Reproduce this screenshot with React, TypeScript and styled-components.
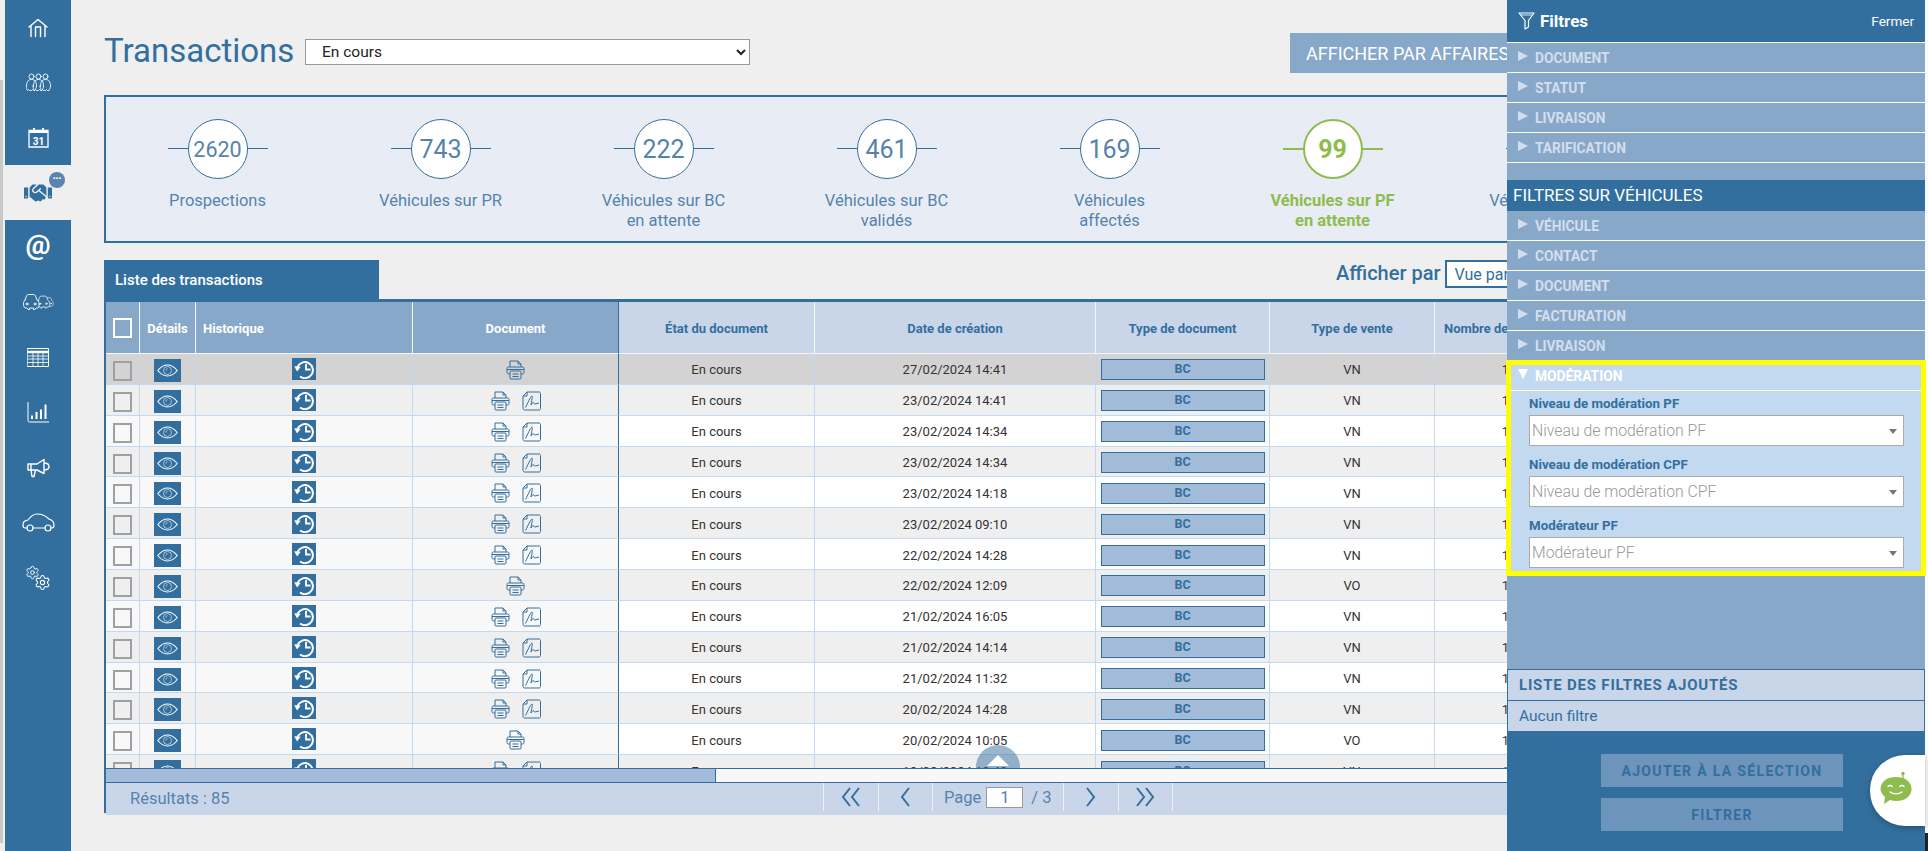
import React from 'react';
import styled, { createGlobalStyle, css } from 'styled-components';
import { FaHandshake } from 'react-icons/fa';
import { Settings } from 'lucide-react';

const BLUE = '#336f9e';
const MID = '#88a8ca';
const PALE = '#c9d6e9';
const GREEN = '#8fbc4e';
const COLS = '34px 56px 217px 206px 196px 281px 174px 165px 142px 200px 200px';

const Global = createGlobalStyle`
  html, body { margin: 0; padding: 0; height: 100%; overflow: hidden; background: #efefef; }
  body { font-family: Roboto, "Liberation Sans", sans-serif; }
  * { box-sizing: border-box; }
`;

const Shell = styled.div`
  position: relative;
  display: flex;
  width: 1928px;
  height: 851px;
  overflow: hidden;
  background: #efefef;
`;
const EdgeBar = styled.div`
  flex: none;
  width: 3px;
  margin: 80px 2px 8px 0;
  background: #c8c8c8;
`;
const Sidebar = styled.nav`
  flex: none;
  width: 66px;
  background: ${BLUE};
  display: flex;
  flex-direction: column;
`;
const NavItem = styled.div<{ $active?: boolean }>`
  position: relative;
  height: 55px;
  display: flex;
  align-items: center;
  justify-content: center;
  color: #fff;
  ${(p) => p.$active && css`background: #efefef; color: ${BLUE};`}
`;
const NavBadge = styled.span`
  position: absolute;
  top: 7px;
  left: 44px;
  width: 16px;
  height: 16px;
  border-radius: 50%;
  background: #5b85b0;
  color: #fff;
  font-size: 8px;
  font-weight: 700;
  line-height: 13px;
  text-align: center;
  letter-spacing: 0;
`;
const AtGlyph = styled.span`
  font-size: 28px;
  font-weight: 700;
  line-height: 1;
  margin-top: -6px;
`;
const Main = styled.main`
  flex: 1;
  min-width: 0;
  overflow: hidden;
  padding: 33px 0 0 33px;
`;
const TitleRow = styled.div`
  display: flex;
  align-items: flex-start;
  height: 39px;
  width: 1800px;
`;
const Title = styled.h1`
  margin: 0;
  width: 201px;
  font-size: 33px;
  line-height: 36px;
  font-weight: 400;
  color: ${BLUE};
`;
const StateSelect = styled.select`
  margin-top: 6px;
  width: 445px;
  height: 26px;
  background: #fff;
  border: 1px solid #999;
  border-radius: 0;
  padding-left: 12px;
  font: 400 15.5px Roboto, sans-serif;
  color: #222;
`;
const GroupButton = styled.button`
  margin-left: 540px;
  flex: none;
  height: 40px;
  padding: 0 16px;
  border: 0;
  background: ${MID};
  color: #fff;
  font: 400 18px Roboto, sans-serif;
  white-space: nowrap;
`;
const Stats = styled.section`
  margin-top: 23px;
  width: 1800px;
  height: 148px;
  border: 2px solid ${BLUE};
  background: #e8edf5;
  padding: 22px 0 0 0;
  display: flex;
`;
const Stat = styled.div<{ $on?: boolean }>`
  flex: none;
  width: 223px;
  display: flex;
  flex-direction: column;
  align-items: center;
  color: ${(p) => (p.$on ? GREEN : '#5583ad')};
`;
const Ring = styled.div<{ $on?: boolean; $long?: boolean }>`
  position: relative;
  width: 60px;
  height: 60px;
  display: flex;
  align-items: center;
  justify-content: center;
  font-size: ${(p) => (p.$long ? 21.5 : 25)}px;
  font-weight: ${(p) => (p.$on ? 700 : 400)};
  &::before {
    content: '';
    position: absolute;
    left: -20px;
    width: 100px;
    top: 29px;
    height: ${(p) => (p.$on ? 2 : 1)}px;
    background: ${(p) => (p.$on ? GREEN : BLUE)};
  }
  &::after {
    content: '';
    position: absolute;
    inset: 0;
    border-radius: 50%;
    background: #fff;
    border: ${(p) => (p.$on ? 2 : 1)}px solid ${(p) => (p.$on ? GREEN : BLUE)};
  }
`;
const RingValue = styled.span`
  position: relative;
  z-index: 1;
`;
const StatLabel = styled.div<{ $on?: boolean }>`
  margin-top: 12px;
  width: 180px;
  text-align: center;
  font-size: 16.5px;
  line-height: 20px;
  font-weight: ${(p) => (p.$on ? 700 : 400)};
`;
const ListBar = styled.div`
  margin-top: 17px;
  height: 39px;
  display: flex;
  width: 1800px;
`;
const Tab = styled.div`
  flex: none;
  width: 275px;
  height: 39px;
  padding: 10px 0 0 11px;
  background: ${BLUE};
  color: #fff;
  font-size: 15px;
  font-weight: 500;
  line-height: 20px;
`;
const ViewLabel = styled.span`
  margin-left: 957px;
  font-size: 20px;
  font-weight: 500;
  line-height: 26px;
  color: ${BLUE};
`;
const ViewSelect = styled.select`
  margin-left: 4px;
  width: 200px;
  height: 28px;
  background: #fff;
  border: 2px solid ${BLUE};
  border-radius: 0;
  padding-left: 4px;
  font: 400 16px Roboto, sans-serif;
  color: #336f9e;
`;
const TableBox = styled.section`
  width: 1800px;
  height: 514px;
  border: 2px solid ${BLUE};
  border-top-width: 3px;
  border-right: 0;
  display: flex;
  flex-direction: column;
`;
const TableView = styled.div`
  position: relative;
  height: 466px;
  flex: none;
  overflow: hidden;
`;
const Grid = styled.div<{ $h: number }>`
  display: grid;
  grid-template-columns: ${COLS};
  height: ${(p) => p.$h}px;
`;
const HeadCell = styled.div<{ $fixed?: boolean; $left?: boolean; $end?: boolean }>`
  display: flex;
  align-items: center;
  justify-content: ${(p) => (p.$left ? 'flex-start' : 'center')};
  padding: ${(p) => (p.$left ? '1px 0 0 7px' : '1px 0 0')};
  font-size: 13px;
  font-weight: 700;
  white-space: nowrap;
  overflow: hidden;
  background: ${(p) => (p.$fixed ? MID : PALE)};
  color: ${(p) => (p.$fixed ? '#fff' : BLUE)};
  border-right: 1px solid ${(p) => (p.$end ? BLUE : '#f2f5fa')};
  border-bottom: 1px solid #f2f5fa;
`;
const Cell = styled.div<{ $bg: string; $end?: boolean }>`
  display: flex;
  align-items: center;
  justify-content: center;
  gap: 12px;
  padding-top: 2px;
  font-size: 13px;
  color: #333;
  background: ${(p) => p.$bg};
  border-right: 1px solid ${(p) => (p.$end ? BLUE : '#c3d9f0')};
  border-bottom: 1px solid #c3d9f0;
`;
const CheckBox = styled.span<{ $head?: boolean }>`
  width: 19px;
  height: 20px;
  border: 2px solid ${(p) => (p.$head ? '#fff' : '#a0a0a0')};
  margin-top: ${(p) => (p.$head ? 0 : 2)}px;
`;
const EyeButton = styled.span`
  width: 27px;
  height: 23px;
  margin-top: 1px;
  background: ${BLUE};
  display: flex;
  align-items: center;
  justify-content: center;
`;
const HistoryButton = styled.span`
  width: 24px;
  height: 22px;
  margin-top: -2px;
  background: ${BLUE};
  display: flex;
  align-items: center;
  justify-content: center;
`;
const TypeTag = styled.span`
  width: 164px;
  height: 21px;
  background: #a1bbd9;
  border: 1.5px solid ${BLUE};
  color: ${BLUE};
  font-size: 12.5px;
  font-weight: 700;
  line-height: 18px;
  text-align: center;
`;
const TopHump = styled.div`
  position: absolute;
  left: 870px;
  top: 443px;
  width: 44px;
  height: 44px;
  border-radius: 50%;
  background: rgba(51, 111, 158, 0.5);
  &::after {
    content: '';
    position: absolute;
    left: 11px;
    top: 10px;
    border-left: 11px solid transparent;
    border-right: 11px solid transparent;
    border-bottom: 11px solid #fff;
  }
`;
const ScrollTrack = styled.div`
  flex: none;
  height: 14px;
  background: #f8f8f8;
  border-top: 1px solid ${BLUE};
`;
const ScrollThumb = styled.div`
  width: 610px;
  height: 13px;
  background: #a1bbd9;
  border-right: 1px solid ${BLUE};
`;
const Footer = styled.footer`
  flex: 1;
  display: flex;
  background: ${PALE};
  border-top: 1px solid ${BLUE};
  color: #5583ad;
  font-size: 16.500px;
`;
const Results = styled.div`
  width: 717px;
  padding-left: 24px;
  line-height: 32px;
`;
const PageBtn = styled.div`
  width: 54.500px;
  height: 28px;
  display: flex;
  align-items: center;
  justify-content: center;
  border-left: 1px solid #eef2f8;
`;
const PageInfo = styled.div`
  width: 131px;
  height: 28px;
  border-left: 1px solid #eef2f8;
  padding-left: 11px;
  display: flex;
  align-items: center;
  gap: 5px;
`;
const PageInput = styled.span`
  width: 37px;
  height: 21px;
  background: #fff;
  border: 1px solid #999;
  text-align: center;
  line-height: 19px;
  margin-right: 3px;
`;
const PageEnd = styled.div`
  width: 1px;
  height: 28px;
  background: #eef2f8;
`;
const RightEdge = styled.div`
  flex: none;
  position: relative;
  width: 3px;
  background: #fafafa;
  &::after {
    content: '';
    position: absolute;
    left: 0;
    right: 0;
    top: 833px;
    bottom: 0;
    background: #222;
  }
`;
const Panel = styled.aside`
  position: absolute;
  z-index: 5;
  top: 0;
  right: 3px;
  width: 418px;
  height: 851px;
  background: ${BLUE};
  display: flex;
  flex-direction: column;
`;
const PanelHead = styled.header`
  flex: none;
  height: 43px;
  border-bottom: 1px solid #fff;
  padding: 0 11px;
  display: flex;
  align-items: center;
  color: #fff;
`;
const PanelTitle = styled.span`
  margin-left: 5px;
  font-size: 17px;
  font-weight: 700;
`;
const CloseLink = styled.span`
  margin-left: auto;
  font-size: 13.5px;
`;
const PanelBody = styled.div`
  flex: none;
  height: 688px;
  background: ${MID};
`;
const Section = styled.div<{ $last?: boolean; $open?: boolean }>`
  height: ${(p) => (p.$open ? 26 : p.$last ? 29 : 30)}px;
  padding: ${(p) => (p.$open ? '0 0 3px 11px' : '1px 0 0 11px')};
  display: flex;
  align-items: center;
  gap: 7px;
  font-size: 13.800px;
  font-weight: 700;
  color: ${(p) => (p.$open ? '#fff' : '#d3deec')};
  border-bottom: ${(p) => (p.$last ? 0 : 1)}px solid #fff;
`;
const Arrow = styled.span<{ $open?: boolean }>`
  width: 0;
  height: 0;
  margin-top: -4px;
  ${(p) =>
    p.$open
      ? css`
          margin-left: -4px;
          border-left: 5px solid transparent;
          border-right: 5px solid transparent;
          border-top: 10px solid #fff;
        `
      : css`
          border-top: 5px solid transparent;
          border-bottom: 5px solid transparent;
          border-left: 10px solid #d3deec;
        `}
`;
const GroupGap = styled.div`
  height: 17px;
`;
const GroupHead = styled.div`
  height: 31px;
  background: ${BLUE};
  color: #fff;
  font-size: 17px;
  line-height: 31px;
  padding-left: 6px;
`;
const Highlight = styled.div`
  margin: 0 -1px;
  height: 216px;
  border: 5px solid #ffff00;
  background: #c3d9f0;
`;
const HighlightBody = styled.div`
  padding: 4px 17px 0 18px;
  display: flex;
  flex-direction: column;
  gap: 10px;
`;
const Field = styled.div`
  display: flex;
  flex-direction: column;
  gap: 2px;
`;
const FieldLabel = styled.label`
  font-size: 13.300px;
  line-height: 18px;
  font-weight: 700;
  color: ${BLUE};
`;
const FakeSelect = styled.div`
  position: relative;
  height: 31px;
  background: #fff;
  border: 1px solid #aaa;
  padding-left: 2px;
  font-size: 15.800px;
  font-weight: 300;
  line-height: 29px;
  color: #999;
  &::after {
    content: '';
    position: absolute;
    right: 6px;
    top: 13px;
    border-left: 4px solid transparent;
    border-right: 4px solid transparent;
    border-top: 5px solid #777;
  }
`;
const AddedList = styled.div`
  margin-top: 93px;
  background: ${PALE};
  color: ${BLUE};
  height: 62px;
  border: 1px solid ${BLUE};
  border-bottom: 0;
`;
const AddedHead = styled.div`
  height: 31px;
  border-bottom: 1px solid ${BLUE};
  padding-left: 11px;
  font-size: 15px;
  font-weight: 700;
  letter-spacing: 0.800px;
  line-height: 30px;
`;
const AddedEmpty = styled.div`
  padding-left: 11px;
  font-size: 15.500px;
  line-height: 30px;
`;
const PanelActions = styled.div`
  position: relative;
  flex: 1;
  padding: 23px 0 0 94px;
  display: flex;
  flex-direction: column;
  gap: 11px;
`;
const ActionButton = styled.div`
  width: 242px;
  height: 33px;
  background: #6d94ba;
  color: ${BLUE};
  font-size: 14px;
  font-weight: 700;
  letter-spacing: 1.330px;
  line-height: 35px;
  text-align: center;
`;
const ChatBubble = styled.div`
  position: absolute;
  right: 0;
  top: 24px;
  width: 55px;
  height: 71px;
  border-radius: 35px 0 0 35px;
  background: #fff;
  box-shadow: 0 2px 6px rgba(0, 0, 0, 0.25);
  padding: 16px 0 0 10px;
`;

const Line = { fill: 'none', stroke: 'currentColor', strokeWidth: 1.2, strokeLinecap: 'round', strokeLinejoin: 'round' } as const;

const HomeIcon = () => (
  <svg width="20" height="20" viewBox="0 0 20 20" {...Line} strokeWidth={1.400}>
    <path d="M1 9 10 1.500 19 9M3 7.500V18.500M17 7.500V18.500M7.500 18.500V9h5v9.500" />
  </svg>
);
const Person = ({ x }: { x: number }) => (
  <g>
    <circle cx={x} cy="3.500" r="2.500" />
    <path d={`M${x - 5} 13c0-4 1.500-6.500 5-6.500s5 2.500 5 6.500c0 2-1 3-1.500 4.500h-1.500l-1-1-1 1h-2l-1-1-1 1c-.8-1.500-1.500-2.500-1.500-4.500z`} />
  </g>
);
const GroupIcon = () => (
  <svg width="25" height="19" viewBox="0 0 25 19" {...Line} strokeWidth={0.900}>
    <Person x={5.500} />
    <Person x={12.500} />
    <Person x={19.500} />
  </svg>
);
const CalendarIcon = () => (
  <svg width="21" height="21" viewBox="0 0 21 21">
    <path d="M1 3.500h19v16.500H1z" fill="none" stroke="currentColor" strokeWidth="1.300" />
    <path d="M1 3.500h19v2.500H1zM5 1h2v3H5zM14 1h2v3h-2z" fill="currentColor" />
    <text x="10.500" y="17.500" textAnchor="middle" fontSize="10" fontWeight="700" fontFamily="Roboto" fill="currentColor">31</text>
  </svg>
);
const CarFront = ({ x, s }: { x: number; s: number }) => (
  <g transform={`translate(${x} ${(17 - 17 * s) / 2 + 1}) scale(${s})`}>
    <path d="M3 6 4.500 2c.4-1 1-1.500 2-1.500h5c1 0 1.600.5 2 1.500L15 6c1.500 1 2 2 2 4 0 2 0 3-1 4h-2l-1 1.500h-1.500V14H7.500v1.500H6L5 14H3c-1-1-1.500-2-1.500-4 0-2 .5-3 1.500-4z" fill="#336f9e" />
    <circle cx="5" cy="10" r="1" />
    <circle cx="13" cy="10" r="1" />
  </g>
);
const CarsIcon = () => (
  <svg width="32" height="19" viewBox="0 0 32 19" {...Line} strokeWidth={0.900}>
    <CarFront x={21} s={0.600} />
    <CarFront x={14} s={0.800} />
    <CarFront x={0} s={1} />
  </svg>
);
const TableIcon = () => (
  <svg width="22" height="19" viewBox="0 0 22 19" {...Line} strokeWidth={1}>
    <rect x="0.500" y="0.500" width="21" height="18" />
    <path d="M.5 4h21" strokeWidth="2.500" />
    <path d="M.5 8h21M.5 11h21M.5 14.500h21M6 4v14.500M11 4v14.500M16 4v14.500" strokeWidth="0.800" />
  </svg>
);
const ChartIcon = () => (
  <svg width="23" height="21" viewBox="0 0 23 21" fill="none" stroke="currentColor">
    <path d="M1 0v18.500c0 1 .5 1.500 1.500 1.500H22" strokeWidth="1" />
    <path d="M5 13.500v3.500M9.500 10v7M14 7.500v9.500M18.500 2.500V17" strokeWidth="2" />
  </svg>
);
const MegaphoneIcon = () => (
  <svg width="23" height="20" viewBox="0 0 23 20" {...Line} strokeWidth={1.400}>
    <path d="M1 6h9l7-4.500v14L10 12H1zM4 6v6M17 5c3 0 5 1.500 5 3.500S20 12 17 12M4 12l1 6.500h2l1.500-6.500" />
  </svg>
);
const CarIcon = () => (
  <svg width="33" height="20" viewBox="0 0 33 20" {...Line} strokeWidth={1.200}>
    <path d="M5 15H3C1.500 15 1 14 1 12 1 9 2 8 6 7 9 3 11 1 15 1c5 0 9 2 12 5 3 1 5 3 5 6 0 2-.5 3-2 3h-1M11 15h12" />
    <circle cx="8" cy="15" r="3" />
    <circle cx="26" cy="15" r="3" />
  </svg>
);
const GearsPair = styled.span`
  position: relative;
  width: 26px;
  height: 26px;
  display: block;
`;
const GearOne = styled(Settings)`
  position: absolute;
  left: 0;
  top: 0;
`;
const GearTwo = styled(Settings)`
  position: absolute;
  right: 0;
  bottom: 0;
`;
const EyeIcon = () => (
  <svg width="21" height="13" viewBox="0 0 21 13" fill="none" stroke="#fff">
    <path d="M.8 6.500C4 2.500 7 1 10.500 1s6.500 1.500 9.700 5.500C17 10.500 14 12 10.500 12S4 10.500.8 6.500z" strokeWidth="1.100" />
    <circle cx="10.500" cy="6.500" r="4" strokeWidth="0.700" opacity="0.800" />
    <path d="M9 6.500c0-1 .5-1.800 1.500-2" strokeWidth="0.600" />
  </svg>
);
const HistoryIcon = () => (
  <svg width="22" height="20" viewBox="0 0 22 20" fill="none" stroke="#fff">
    <path d="M4.500 8a8 8 0 1 1 2.500 9.500" strokeWidth="2" />
    <path d="M1 7.500h6.500L4.300 12.500z" fill="#fff" stroke="none" transform="rotate(5 4 10)" />
    <path d="M13 5v5.500h4.500" strokeWidth="1.800" />
  </svg>
);
const PrinterIcon = () => (
  <svg width="19" height="20" viewBox="0 0 19 20" fill="none" stroke="#336f9e" strokeWidth="1" strokeLinejoin="round">
    <path d="M4 7V1h8l3 3v3M12 1v3h3" />
    <path d="M4 14H2.500C1.500 14 1 13.500 1 12.500v-4C1 7.500 1.500 7 2.500 7h14c1 0 1.500.5 1.500 1.500v4c0 1-.5 1.500-1.500 1.500H15" />
    <path d="M1 9.500h17" />
    <rect x="4" y="11" width="11" height="8" rx="1" />
    <path d="M6.500 14h6M6.500 16.500h6" />
  </svg>
);
const SignedDocIcon = () => (
  <svg width="19" height="20" viewBox="0 0 19 20" fill="none" stroke="#336f9e" strokeWidth="1" strokeLinejoin="round">
    <path d="M5 1h12c.8 0 1.500.7 1.500 1.500v15c0 .8-.7 1.500-1.500 1.500H2.500C1.700 19 1 18.300 1 17.500V5zM5 1v4H1" />
    <path d="M3.500 16.500C6 12 8 6 10 5c1-.5-1 8-1 9 1-2 2-3 3-2 .5.500 0 1 1 1l4-1" />
  </svg>
);
const Chevrons = ({ dir, count }: { dir: 'l' | 'r'; count: number }) => (
  <svg width={count === 2 ? 20 : 11} height="20" viewBox={`0 0 ${count === 2 ? 20 : 11} 20`} fill="none" stroke="#336f9e" strokeWidth="2">
    {Array.from({ length: count }, (_, i) => {
      const x = i * 9;
      return <path key={i} d={dir === 'l' ? `M${x + 9} 1 ${x + 2} 10l7 9` : `M${x + 2} 1l7 9-7 9`} />;
    })}
  </svg>
);
const FunnelIcon = () => (
  <svg width="17" height="18" viewBox="0 0 17 18" fill="none" stroke="#fff" strokeWidth="1.200" strokeLinejoin="round">
    <path d="M1 1h15l-5.500 7.500V15L7 17V8.500z" />
    <path d="M3 3h11" strokeWidth="0.800" />
  </svg>
);
const BotIcon = () => (
  <svg width="32" height="34" viewBox="0 0 32 34">
    <circle cx="23" cy="2.500" r="1.700" fill={GREEN} />
    <path d="M23 3v6" stroke={GREEN} strokeWidth="1.300" />
    <path d="M16 6c9 0 15.500 4.500 15.500 12S25 30 16 30c-2 0-4-.3-6-1L4 33l1-7C2 23 .5 21 .5 18 .5 10.500 7 6 16 6z" fill={GREEN} />
    <path d="M8 15.500c1-1.500 3-1.500 4 0M20 15.500c1-1.500 3-1.500 4 0M10 21c3 2.500 9 2.500 12 0" stroke="#fff" strokeWidth="1.400" fill="none" strokeLinecap="round" />
  </svg>
);

const stats = [
  { n: '2620', l: ['Prospections'] },
  { n: '743', l: ['Véhicules sur PR'] },
  { n: '222', l: ['Véhicules sur BC', 'en attente'] },
  { n: '461', l: ['Véhicules sur BC', 'validés'] },
  { n: '169', l: ['Véhicules', 'affectés'] },
  { n: '99', l: ['Véhicules sur PF', 'en attente'], on: true },
  { n: '12', l: ['Véhicules sur CPF', 'en attente'] },
];
const rows: [string, string, boolean][] = [
  ['27/02/2024 14:41', 'VN', false],
  ['23/02/2024 14:41', 'VN', true],
  ['23/02/2024 14:34', 'VN', true],
  ['23/02/2024 14:34', 'VN', true],
  ['23/02/2024 14:18', 'VN', true],
  ['23/02/2024 09:10', 'VN', true],
  ['22/02/2024 14:28', 'VN', true],
  ['22/02/2024 12:09', 'VO', false],
  ['21/02/2024 16:05', 'VN', true],
  ['21/02/2024 14:14', 'VN', true],
  ['21/02/2024 11:32', 'VN', true],
  ['20/02/2024 14:28', 'VN', true],
  ['20/02/2024 10:05', 'VO', false],
  ['19/02/2024 18:48', 'VN', true],
];
const moderation = ['Niveau de modération PF', 'Niveau de modération CPF', 'Modérateur PF'];

export default function App() {
  return (
    <Shell>
      <Global />
      <EdgeBar />
      <Sidebar>
        <NavItem><HomeIcon /></NavItem>
        <NavItem><GroupIcon /></NavItem>
        <NavItem><CalendarIcon /></NavItem>
        <NavItem $active>
          <FaHandshake size={28} />
          <NavBadge>•••</NavBadge>
        </NavItem>
        <NavItem><AtGlyph>@</AtGlyph></NavItem>
        <NavItem><CarsIcon /></NavItem>
        <NavItem><TableIcon /></NavItem>
        <NavItem><ChartIcon /></NavItem>
        <NavItem><MegaphoneIcon /></NavItem>
        <NavItem><CarIcon /></NavItem>
        <NavItem>
          <GearsPair>
            <GearOne size={15} strokeWidth={1.500} />
            <GearTwo size={17} strokeWidth={1.500} />
          </GearsPair>
        </NavItem>
      </Sidebar>
      <Main>
        <TitleRow>
          <Title>Transactions</Title>
          <StateSelect defaultValue="En cours"><option>En cours</option></StateSelect>
          <GroupButton>AFFICHER PAR AFFAIRES</GroupButton>
        </TitleRow>
        <Stats>
          {stats.map((s) => (
            <Stat key={s.n} $on={s.on}>
              <Ring $on={s.on} $long={s.n.length > 3}><RingValue>{s.n}</RingValue></Ring>
              <StatLabel $on={s.on}>
                {s.l.map((t) => <div key={t}>{t}</div>)}
              </StatLabel>
            </Stat>
          ))}
        </Stats>
        <ListBar>
          <Tab>Liste des transactions</Tab>
          <ViewLabel>Afficher par</ViewLabel>
          <ViewSelect defaultValue="Vue par affaires"><option>Vue par affaires</option></ViewSelect>
        </ListBar>
        <TableBox>
          <TableView>
            <Grid $h={52}>
              <HeadCell $fixed><CheckBox $head /></HeadCell>
              <HeadCell $fixed>Détails</HeadCell>
              <HeadCell $fixed $left>Historique</HeadCell>
              <HeadCell $fixed $end>Document</HeadCell>
              <HeadCell>État du document</HeadCell>
              <HeadCell>Date de création</HeadCell>
              <HeadCell>Type de document</HeadCell>
              <HeadCell>Type de vente</HeadCell>
              <HeadCell>Nombre de véhicules</HeadCell>
              <HeadCell />
              <HeadCell />
            </Grid>
            {rows.map(([date, sale, signed], i) => {
              const fixedBg = i === 0 ? '#d3d3d3' : i % 2 ? '#efefef' : '#f8f8f8';
              const bg = i === 0 ? '#d3d3d3' : i % 2 ? '#efefef' : '#ffffff';
              return (
                <Grid key={i} $h={30.870}>
                  <Cell $bg={fixedBg}><CheckBox /></Cell>
                  <Cell $bg={fixedBg}><EyeButton><EyeIcon /></EyeButton></Cell>
                  <Cell $bg={fixedBg}><HistoryButton><HistoryIcon /></HistoryButton></Cell>
                  <Cell $bg={fixedBg} $end>
                    <PrinterIcon />
                    {signed && <SignedDocIcon />}
                  </Cell>
                  <Cell $bg={bg}>En cours</Cell>
                  <Cell $bg={bg}>{date}</Cell>
                  <Cell $bg={bg}><TypeTag>BC</TypeTag></Cell>
                  <Cell $bg={bg}>{sale}</Cell>
                  <Cell $bg={bg}>1</Cell>
                  <Cell $bg={bg} />
                  <Cell $bg={bg} />
                </Grid>
              );
            })}
            <TopHump />
          </TableView>
          <ScrollTrack><ScrollThumb /></ScrollTrack>
          <Footer>
            <Results>Résultats : 85</Results>
            <PageBtn><Chevrons dir="l" count={2} /></PageBtn>
            <PageBtn><Chevrons dir="l" count={1} /></PageBtn>
            <PageInfo>Page <PageInput>1</PageInput> / 3</PageInfo>
            <PageBtn><Chevrons dir="r" count={1} /></PageBtn>
            <PageBtn><Chevrons dir="r" count={2} /></PageBtn>
            <PageEnd />
          </Footer>
        </TableBox>
      </Main>
      <RightEdge />
      <Panel>
        <PanelHead>
          <FunnelIcon />
          <PanelTitle>Filtres</PanelTitle>
          <CloseLink>Fermer</CloseLink>
        </PanelHead>
        <PanelBody>
          {['DOCUMENT', 'STATUT', 'LIVRAISON', 'TARIFICATION'].map((t) => (
            <Section key={t}><Arrow />{t}</Section>
          ))}
          <GroupGap />
          <GroupHead>FILTRES SUR VÉHICULES</GroupHead>
          {['VÉHICULE', 'CONTACT', 'DOCUMENT', 'FACTURATION'].map((t) => (
            <Section key={t}><Arrow />{t}</Section>
          ))}
          <Section $last><Arrow />LIVRAISON</Section>
          <Highlight>
            <Section $open><Arrow $open />MODÉRATION</Section>
            <HighlightBody>
              {moderation.map((t) => (
                <Field key={t}>
                  <FieldLabel>{t}</FieldLabel>
                  <FakeSelect>{t}</FakeSelect>
                </Field>
              ))}
            </HighlightBody>
          </Highlight>
          <AddedList>
            <AddedHead>LISTE DES FILTRES AJOUTÉS</AddedHead>
            <AddedEmpty>Aucun filtre</AddedEmpty>
          </AddedList>
        </PanelBody>
        <PanelActions>
          <ActionButton>AJOUTER À LA SÉLECTION</ActionButton>
          <ActionButton>FILTRER</ActionButton>
          <ChatBubble><BotIcon /></ChatBubble>
        </PanelActions>
      </Panel>
    </Shell>
  );
}
